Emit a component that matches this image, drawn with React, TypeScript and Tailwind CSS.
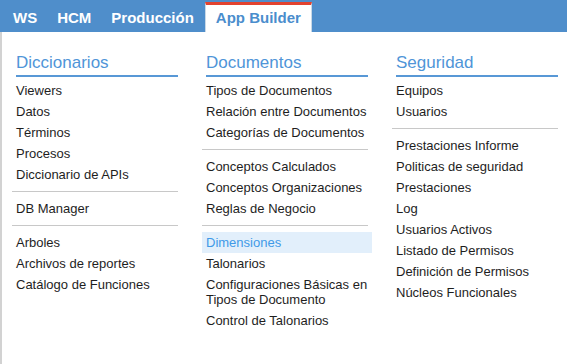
const tabs = ['WS', 'HCM', 'Producción'];

type Entry = string | null; // null = separador

const columns: { title: string; items: Entry[] }[] = [
  {
    title: 'Diccionarios',
    items: [
      'Viewers',
      'Datos',
      'Términos',
      'Procesos',
      'Diccionario de APIs',
      null,
      'DB Manager',
      null,
      'Arboles',
      'Archivos de reportes',
      'Catálogo de Funciones',
    ],
  },
  {
    title: 'Documentos',
    items: [
      'Tipos de Documentos',
      'Relación entre Documentos',
      'Categorías de Documentos',
      null,
      'Conceptos Calculados',
      'Conceptos Organizaciones',
      'Reglas de Negocio',
      null,
      'Dimensiones',
      'Talonarios',
      'Configuraciones Básicas en Tipos de Documento',
      'Control de Talonarios',
    ],
  },
  {
    title: 'Seguridad',
    items: [
      'Equipos',
      'Usuarios',
      null,
      'Prestaciones Informe',
      'Politicas de seguridad',
      'Prestaciones',
      'Log',
      'Usuarios Activos',
      'Listado de Permisos',
      'Definición de Permisos',
      'Núcleos Funcionales',
    ],
  },
];

export default function App() {
  return (
    <div className="w-[567px] h-[364px] bg-white overflow-hidden font-['Liberation_Sans',Arial,sans-serif]">
      {/* Barra superior */}
      <div className="h-[32px] bg-[#4f8ecb] flex items-end pl-[3px]">
        {tabs.map((t) => (
          <div
            key={t}
            className="h-[30px] border-t-[3px] border-transparent px-[10px] flex items-center text-[15px] font-bold text-white"
          >
            {t}
          </div>
        ))}
        <div className="h-[30px] ml-px border-t-[3px] border-[#e2432f] border-x border-x-[#c9d8e6] bg-white px-[10px] flex items-center text-[15px] font-bold text-[#4a8dcd]">
          App Builder
        </div>
      </div>

      {/* Menú desplegable */}
      <div className="h-[332px] border-l-2 border-[#d2d2d2] pl-[14px] pt-[21px] flex gap-[28px]">
        {columns.map((col) => (
          <div key={col.title} className="w-[162px] flex flex-col">
            <div className="text-[17px] leading-[20px] text-[#4f95d8] pb-[2px] border-b-2 border-[#5898d6]">
              {col.title}
            </div>
            <ul className="mt-[3px] flex flex-col">
              {col.items.map((item, i) =>
                item === null ? (
                  <li key={i} className="h-px my-[6px] -ml-[4px] bg-[#c8c8c8]" />
                ) : (
                  <li
                    key={i}
                    className={`-mx-[4px] px-[4px] py-[3px] text-[13px] leading-[15px] ${
                      item === 'Dimensiones' ? 'bg-[#e2effb] text-[#3f9ae8]' : 'text-[#1e1e1e]'
                    }`}
                  >
                    {item}
                  </li>
                )
              )}
            </ul>
          </div>
        ))}
      </div>
    </div>
  );
}
